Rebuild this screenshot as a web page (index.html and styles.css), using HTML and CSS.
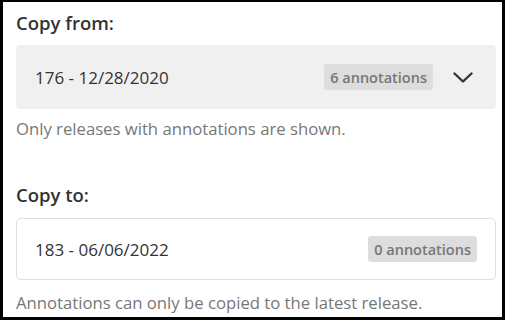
FILE: index.html
```html
<!DOCTYPE html>
<html lang="en">
<head>
<meta charset="utf-8">
<title>Copy annotations</title>
<link rel="stylesheet" href="styles.css">
</head>
<body>
<div class="frame">
  <section class="field field-from">
    <h2 class="label">Copy from:</h2>
    <div class="select">
      <span class="value">176 - 12/28/2020</span>
      <span class="badge">6 annotations</span>
      <svg class="chevron" width="20" height="11" viewBox="0 0 20 11" aria-hidden="true">
        <path d="M1.5 1.5 L10 9.5 L18.5 1.5" fill="none" stroke="#333" stroke-width="2.4" stroke-linecap="round" stroke-linejoin="round"/>
      </svg>
    </div>
    <p class="hint">Only releases with annotations are shown.</p>
  </section>
  <section class="field field-to">
    <h2 class="label">Copy to:</h2>
    <div class="select select-static">
      <span class="value">183 - 06/06/2022</span>
      <span class="badge">0 annotations</span>
    </div>
    <p class="hint">Annotations can only be copied to the latest release.</p>
  </section>
</div>
</body>
</html>
```

FILE: styles.css
```css
html, body {
  margin: 0;
  padding: 0;
  background: #fff;
}

.frame {
  box-sizing: border-box;
  width: 505px;
  height: 320px;
  overflow: hidden;
  border-style: solid;
  border-color: #000;
  border-width: 2px 3px 3px 3px;
  padding: 9px 6px 0 13px;
  font-family: "Open Sans", "Noto Sans", sans-serif;
  color: #333;
  background: #fff;
}

.field {
  display: flex;
  flex-direction: column;
}

.label {
  margin: 0;
  font-size: 18.5px;
  font-weight: 600;
  line-height: 24px;
  color: #333;
}

.select {
  box-sizing: border-box;
  display: flex;
  align-items: center;
  height: 64px;
  margin-top: 10px;
  padding: 0 23px 0 19px;
  background: #f0f0f0;
  border-radius: 4px;
}

.select-static {
  height: 62px;
  margin-top: 11px;
  padding: 0 18px 0 18px;
  background: #fff;
  border: 1px solid #dedede;
  border-radius: 5px;
}

.value {
  flex: 1;
  font-size: 17px;
  color: #333;
}

.badge {
  display: flex;
  align-items: center;
  height: 26px;
  padding: 0 6px;
  background: #dddddd;
  border-radius: 3px;
  font-size: 14.5px;
  font-weight: 600;
  color: #777;
}

.chevron {
  margin-left: 20px;
  display: block;
}

.hint {
  margin: 8px 0 0 0;
  font-size: 16.7px;
  line-height: 24px;
  color: #777;
}

.field-to {
  margin-top: 42px;
}

.field-to .hint {
  margin-top: 11px;
}
```
